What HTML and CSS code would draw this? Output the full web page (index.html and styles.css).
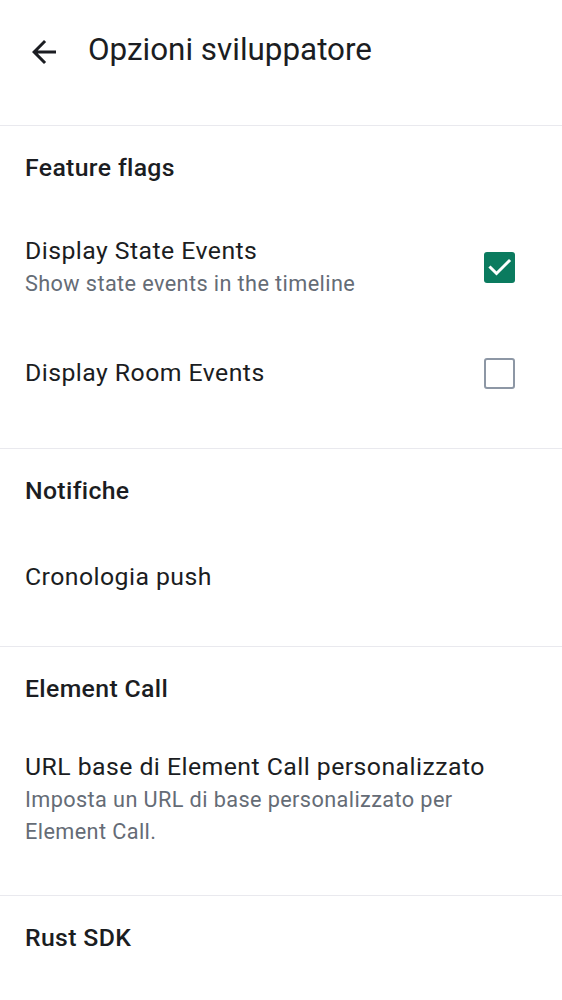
FILE: index.html
```html
<!DOCTYPE html>
<html lang="it">
<head>
<meta charset="utf-8">
<link rel="stylesheet" href="styles.css">
</head>
<body>
<div class="screen">
  <header class="topbar">
    <button class="back" aria-label="Indietro">
      <svg viewBox="0 0 24 24" width="36" height="36"><path d="M20 11H7.83l5.59-5.59L12 4l-8 8 8 8 1.41-1.41L7.83 13H20v-2z" fill="#1b1d22"/></svg>
    </button>
    <h1 class="title">Opzioni sviluppatore</h1>
  </header>

  <section class="section s-flags">
    <h2 class="section-header">Feature flags</h2>
    <div class="item item-state">
      <div class="item-text">
        <div class="item-title">Display State Events</div>
        <div class="item-sub">Show state events in the timeline</div>
      </div>
      <span class="checkbox checked">
        <svg viewBox="0 0 31 31" width="31" height="31"><path d="M6.5 15.5l6 6 12.5-12.5" fill="none" stroke="#fff" stroke-width="3" stroke-linecap="square"/></svg>
      </span>
    </div>
    <div class="item item-room">
      <div class="item-text">
        <div class="item-title">Display Room Events</div>
      </div>
      <span class="checkbox"></span>
    </div>
  </section>

  <section class="section s-notif">
    <h2 class="section-header">Notifiche</h2>
    <div class="item item-push">
      <div class="item-text">
        <div class="item-title">Cronologia push</div>
      </div>
    </div>
  </section>

  <section class="section s-call">
    <h2 class="section-header">Element Call</h2>
    <div class="item item-url">
      <div class="item-text">
        <div class="item-title">URL base di Element Call personalizzato</div>
        <div class="item-sub narrow">Imposta un URL di base personalizzato per Element Call.</div>
      </div>
    </div>
  </section>

  <section class="section s-rust">
    <h2 class="section-header">Rust SDK</h2>
  </section>
</div>
</body>
</html>
```

FILE: styles.css
```css
* { box-sizing: border-box; }
html, body { margin: 0; padding: 0; background: #fff; }
body {
  font-family: Roboto, "Noto Sans", sans-serif;
  color: #1b1d22;
  width: 562px;
  height: 1000px;
  overflow: hidden;
}
.screen { display: flex; flex-direction: column; }

.topbar {
  display: flex;
  align-items: center;
  height: 100px;
  padding-left: 26px;
}
.back {
  width: 36px; height: 36px;
  border: 0; background: none; padding: 0;
  display: flex; align-items: center; justify-content: center;
  margin-top: 4px;
}
.back svg { display: block; }
.title {
  margin: 0 0 0 26px;
  font-size: 31.4px;
  font-weight: 400;
  line-height: 34px;
  letter-spacing: 0;
}

.section { border-top: 1px solid #e9e9ee; }
.s-flags { margin-top: 25px; }

.section-header {
  margin: 0;
  padding: 27px 25px 0;
  font-size: 24.8px;
  font-weight: 500;
  line-height: 30px;
  letter-spacing: 0.35px;
}

.item {
  display: flex;
  align-items: center;
  justify-content: space-between;
  padding: 0 47px 0 25px;
}
.item-title {
  font-size: 24.8px;
  line-height: 34px;
  letter-spacing: 0.45px;
}
.item-sub {
  font-size: 21.7px;
  line-height: 32px;
  color: #656c76;
  letter-spacing: 0.39px;
}
.item-sub.narrow { max-width: 440px; }

.item-state { padding-top: 51px; }
.item-room { padding-top: 56px; padding-bottom: 58px; }
.item-push { padding-top: 54px; padding-bottom: 52px; }
.item-url { padding-top: 46px; padding-bottom: 47px; }

.checkbox {
  width: 31px; height: 31px;
  border-radius: 3px;
  border: 2.5px solid #8d97a5;
  flex: none;
  display: block;
}
.checkbox.checked {
  border: 0;
  background: #0b7b5f;
}
.checkbox svg { display: block; }
```
